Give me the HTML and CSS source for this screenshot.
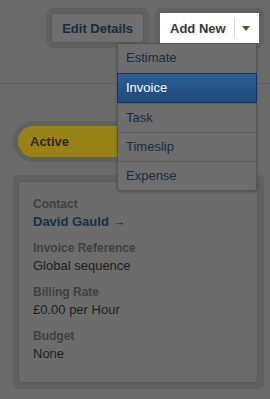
FILE: index.html
```html
<!DOCTYPE html>
<html lang="en">

<head>
  <meta charset="UTF-8">
  <meta name="viewport" content="width=device-width, initial-scale=1.0">
  <title>Project</title>
  <link rel="stylesheet" href="styles.css">
</head>

<body>
  <!-- Barre d'actions -->
  <div class="header">
    <div class="toolbar">
      <div class="ring">
        <button class="btn">Edit Details</button>
      </div>
      <div class="ring add-wrap">
        <button class="btn btn-add">
          <span>Add New</span>
          <span class="split"></span>
          <span class="caret"></span>
        </button>
        <ul class="menu">
          <li>Estimate</li>
          <li class="selected">Invoice</li>
          <li>Task</li>
          <li>Timeslip</li>
          <li>Expense</li>
        </ul>
      </div>
    </div>
  </div>

  <div class="content">
    <div class="ring pill-ring">
      <div class="pill">Active</div>
    </div>

    <div class="ring card-ring">
      <div class="card">
        <div class="field">
          <div class="label">Contact</div>
          <div class="value link">David Gauld &rarr;</div>
        </div>
        <div class="field">
          <div class="label">Invoice Reference</div>
          <div class="value">Global sequence</div>
        </div>
        <div class="field">
          <div class="label">Billing Rate</div>
          <div class="value">&pound;0.00 per Hour</div>
        </div>
        <div class="field">
          <div class="label">Budget</div>
          <div class="value">None</div>
        </div>
      </div>
    </div>
  </div>
</body>

</html>
```

FILE: styles.css
```css
body {
  font-family: "Liberation Sans", Arial, sans-serif;
  margin: 0;
  padding: 0;
  background-color: #6a6a6a;
  color: #1e1e1e;
  font-size: 13px;
}

.header {
  height: 83px;
  border-bottom: 1px solid #5d5d5d;
}

.toolbar {
  display: flex;
  justify-content: flex-end;
  gap: 6px;
  padding: 8px 6px 0 0;
}

.ring {
  background: #606060;
  border-radius: 7px;
  padding: 5px;
}

.btn {
  height: 30px;
  padding: 0 10px;
  border: 1px solid #5a5a5a;
  border-radius: 3px;
  background: #6f6f6f;
  color: #1b2b40;
  font-family: inherit;
  font-size: 13px;
  font-weight: bold;
  cursor: pointer;
}

.add-wrap {
  position: relative;
}

.btn-add {
  display: flex;
  align-items: center;
  width: 99px;
  background: #fff;
  border-color: #fff;
  border-radius: 0;
  color: #3a3a3a;
  padding: 0 0 0 9px;
}

.split {
  width: 1px;
  height: 20px;
  margin: 0 7px 0 8px;
  background: #d6d9c8;
}

.caret {
  width: 0;
  height: 0;
  border-left: 4px solid transparent;
  border-right: 4px solid transparent;
  border-top: 5px solid #4e5e14;
}

.menu {
  position: absolute;
  top: 35px;
  right: 7px;
  width: 138px;
  margin: 0;
  padding: 0;
  list-style: none;
  background: #6e6e6e;
  border: 1px solid #565656;
  border-radius: 0 0 3px 3px;
  box-shadow: 0 1px 3px rgba(0, 0, 0, 0.25);
}

.menu li {
  height: 28px;
  line-height: 28px;
  padding-left: 8px;
  color: #1b2b40;
  border-top: 1px solid #5e5e5e;
}

.menu li:first-child {
  border-top: none;
  height: 29px;
}

.menu li.selected {
  background: linear-gradient(#2f6097, #1f4a7c);
  border: 1px solid #16355a;
  margin: 0 -1px;
  color: #fff;
}

.content {
  padding: 37px 6px 0 13px;
}

.pill-ring {
  display: inline-block;
  border-radius: 22px;
}

.pill {
  width: 110px;
  height: 31px;
  line-height: 31px;
  padding-left: 12px;
  background: #998316;
  border-radius: 16px 0 0 16px;
  font-weight: bold;
  color: #2c2810;
}

.card-ring {
  margin-top: 13px;
  padding: 6px 6px 6px 5px;
  border-radius: 5px;
}

.card {
  height: 186px;
  padding: 14px 14px 0 14px;
  background: #6c6c6c;
  border: 1px solid #595959;
  border-radius: 3px;
}

.field {
  margin-bottom: 10px;
}

.label {
  font-size: 12px;
  font-weight: bold;
  color: #404040;
  line-height: 17px;
}

.value {
  line-height: 17px;
}

.link {
  font-weight: bold;
  color: #1a2e4a;
}
```
